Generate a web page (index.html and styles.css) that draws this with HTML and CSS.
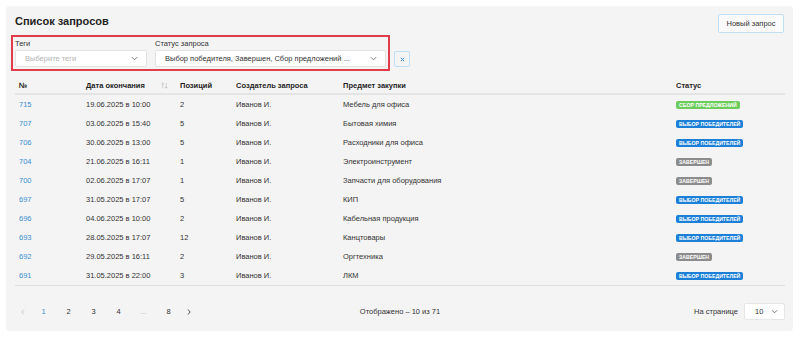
FILE: index.html
```html
<!DOCTYPE html>
<html lang="ru">
<head>
  <meta charset="UTF-8">
  <title>Список запросов</title>
  <meta name="viewport" content="width=device-width, initial-scale=1.0">
  <link rel="stylesheet" href="styles.css">
</head>
<body>
  <div class="card">
    <div class="top">
      <h1>Список запросов</h1>
      <button class="btn">Новый запрос</button>
    </div>

    <div class="filters-row">
      <div class="filters">
        <div class="field tags">
          <label>Теги</label>
          <div class="select placeholder">
            <span>Выберите теги</span>
            <svg class="chev" viewBox="0 0 8 5"><path d="M1 1l3 3 3-3" /></svg>
          </div>
        </div>
        <div class="field status">
          <label>Статус запроса</label>
          <div class="select">
            <span>Выбор победителя, Завершен, Сбор предложений ...</span>
            <svg class="chev" viewBox="0 0 8 5"><path d="M1 1l3 3 3-3" /></svg>
          </div>
        </div>
      </div>
      <button class="clear">
        <svg viewBox="0 0 6 6"><path d="M1 1l4 4M5 1l-4 4" /></svg>
      </button>
    </div>

    <table class="list">
      <colgroup>
        <col style="width:67px">
        <col style="width:94px">
        <col style="width:56px">
        <col style="width:107px">
        <col style="width:333px">
        <col style="width:113px">
      </colgroup>
      <thead>
        <tr>
          <th>№</th>
          <th>
            <div class="sortable">Дата окончания
              <svg class="sort" viewBox="0 0 8 8"><path d="M2 7V1M0.6 2.4L2 1l1.4 1.4M6 1v6M4.6 5.6L6 7l1.4-1.4" /></svg>
            </div>
          </th>
          <th>Позиций</th>
          <th>Создатель запроса</th>
          <th>Предмет закупки</th>
          <th>Статус</th>
        </tr>
      </thead>
      <tbody>
        <tr><td><a href="#">715</a></td><td>19.06.2025 в 10:00</td><td>2</td><td>Иванов И.</td><td>Мебель для офиса</td><td><span class="badge green">Сбор предложений</span></td></tr>
        <tr><td><a href="#">707</a></td><td>03.06.2025 в 15:40</td><td>5</td><td>Иванов И.</td><td>Бытовая химия</td><td><span class="badge blue">Выбор победителей</span></td></tr>
        <tr><td><a href="#">706</a></td><td>30.06.2025 в 13:00</td><td>5</td><td>Иванов И.</td><td>Расходники для офиса</td><td><span class="badge blue">Выбор победителей</span></td></tr>
        <tr><td><a href="#">704</a></td><td>21.06.2025 в 16:11</td><td>1</td><td>Иванов И.</td><td>Электроинструмент</td><td><span class="badge gray">Завершен</span></td></tr>
        <tr><td><a href="#">700</a></td><td>02.06.2025 в 17:07</td><td>1</td><td>Иванов И.</td><td>Запчасти для оборудования</td><td><span class="badge gray">Завершен</span></td></tr>
        <tr><td><a href="#">697</a></td><td>31.05.2025 в 17:07</td><td>5</td><td>Иванов И.</td><td>КИП</td><td><span class="badge blue">Выбор победителей</span></td></tr>
        <tr><td><a href="#">696</a></td><td>04.06.2025 в 10:00</td><td>2</td><td>Иванов И.</td><td>Кабельная продукция</td><td><span class="badge blue">Выбор победителей</span></td></tr>
        <tr><td><a href="#">693</a></td><td>28.05.2025 в 17:07</td><td>12</td><td>Иванов И.</td><td>Канцтовары</td><td><span class="badge blue">Выбор победителей</span></td></tr>
        <tr><td><a href="#">692</a></td><td>29.05.2025 в 16:11</td><td>2</td><td>Иванов И.</td><td>Оргтехника</td><td><span class="badge gray">Завершен</span></td></tr>
        <tr><td><a href="#">691</a></td><td>31.05.2025 в 22:00</td><td>3</td><td>Иванов И.</td><td>ЛКМ</td><td><span class="badge blue">Выбор победителей</span></td></tr>
      </tbody>
    </table>

    <div class="footer">
      <div class="pager">
        <span class="arrow"><svg viewBox="0 0 4 6"><path d="M3 0.5L0.8 3 3 5.5" /></svg></span>
        <span class="page active">1</span>
        <span class="page">2</span>
        <span class="page">3</span>
        <span class="page">4</span>
        <span class="page muted">...</span>
        <span class="page">8</span>
        <span class="arrow next"><svg viewBox="0 0 4 6"><path d="M1 0.5L3.2 3 1 5.5" /></svg></span>
      </div>
      <div class="shown">Отображено – 10 из 71</div>
      <div class="per-page">
        <span>На странице</span>
        <div class="select small">
          <span>10</span>
          <svg class="chev" viewBox="0 0 8 5"><path d="M1 1l3 3 3-3" /></svg>
        </div>
      </div>
    </div>
  </div>
</body>
</html>
```

FILE: styles.css
```css
body {
  margin: 0;
  padding: 6px;
  background: #ffffff;
  color: #333333;
  font-family: 'Liberation Sans', Arial, sans-serif;
  font-size: 7.5px;
}

.card {
  width: 787px;
  height: 325px;
  box-sizing: border-box;
  padding: 8px 8px 0 9px;
  background: #f4f4f4;
  border-radius: 4px;
}

.top {
  display: flex;
  justify-content: space-between;
  align-items: flex-start;
}

h1 {
  margin: 1px 0 0 0;
  font-size: 11px;
  line-height: 12px;
  color: #1f1f1f;
}

.btn {
  height: 19px;
  width: 66px;
  margin-right: 1px;
  padding: 0;
  background: #fafafa;
  border: 1px solid #bfe0f4;
  border-radius: 2px;
  font-family: inherit;
  font-size: 7.5px;
  color: #333333;
}

.filters-row {
  display: flex;
  align-items: flex-end;
  margin-top: 2px;
}

.filters {
  display: flex;
  gap: 8px;
  margin-left: -4px;
  padding: 2px;
  border: 2px solid #e23b4c;
}

.field label {
  display: block;
  height: 10px;
  line-height: 10px;
  margin-bottom: 1px;
  color: #333333;
}

.tags {
  width: 132px;
}

.status {
  width: 231px;
}

.select {
  display: flex;
  align-items: center;
  justify-content: space-between;
  height: 17px;
  box-sizing: border-box;
  padding: 0 8px 0 9px;
  background: #ffffff;
  border: 1px solid #e3e3e3;
  border-radius: 2px;
  color: #333333;
}

.select.placeholder {
  color: #b4b4b4;
}

.chev {
  width: 7px;
  height: 5px;
  fill: none;
  stroke: #666666;
  stroke-width: 1;
}

.clear {
  width: 16px;
  height: 16px;
  margin: 0 0 4px 4px;
  padding: 0;
  display: flex;
  align-items: center;
  justify-content: center;
  background: #f4f4f4;
  border: 1px solid #bfe0f4;
  border-radius: 2px;
}

.clear svg {
  width: 5px;
  height: 5px;
  fill: none;
  stroke: #3b8ad0;
  stroke-width: 1.2;
}

.list {
  width: 770px;
  margin-top: 6px;
  border-collapse: collapse;
  table-layout: fixed;
}

.list th {
  height: 16px;
  padding: 0 0 0 4px;
  text-align: left;
  font-weight: bold;
  color: #1f1f1f;
  border-bottom: 2px solid #e4e4e4;
}

.sortable {
  display: flex;
  justify-content: space-between;
  align-items: center;
  padding-right: 8px;
}

.sort {
  width: 7px;
  height: 7px;
  fill: none;
  stroke: #bdbdbd;
  stroke-width: 0.8;
}

.list td {
  height: 19px;
  padding: 0 0 0 4px;
  color: #333333;
  white-space: nowrap;
}

.list tbody tr:last-child td {
  border-bottom: 1px solid #dedede;
}

.list a {
  color: #3a8fd3;
  text-decoration: none;
}

.badge {
  display: inline-block;
  padding: 0 3px;
  height: 8px;
  line-height: 8px;
  border-radius: 2px;
  font-size: 5.2px;
  font-weight: bold;
  text-transform: uppercase;
  color: #ffffff;
  vertical-align: middle;
}

.green { background: #6ccd5d; }
.blue { background: #1c80d8; }
.gray { background: #8c8c8c; }

.footer {
  display: grid;
  grid-template-columns: 1fr auto 1fr;
  align-items: center;
  padding-top: 17px;
}

.pager {
  display: flex;
  align-items: center;
  color: #333333;
}

.pager span {
  text-align: center;
}

.arrow {
  width: 16px;
  display: flex;
  justify-content: center;
}

.arrow svg {
  width: 4px;
  height: 6px;
  fill: none;
  stroke: #c4c4c4;
  stroke-width: 0.9;
}

.arrow.next svg {
  stroke: #444444;
}

.page {
  width: 25px;
}

.active {
  color: #3a8fd3;
}

.muted {
  color: #b0b0b0;
}

.shown {
  color: #333333;
}

.per-page {
  display: flex;
  align-items: center;
  justify-content: flex-end;
  gap: 6px;
}

.select.small {
  width: 41px;
  height: 17px;
  padding: 0 6px 0 10px;
  border-color: #e6e6e6;
}
```
